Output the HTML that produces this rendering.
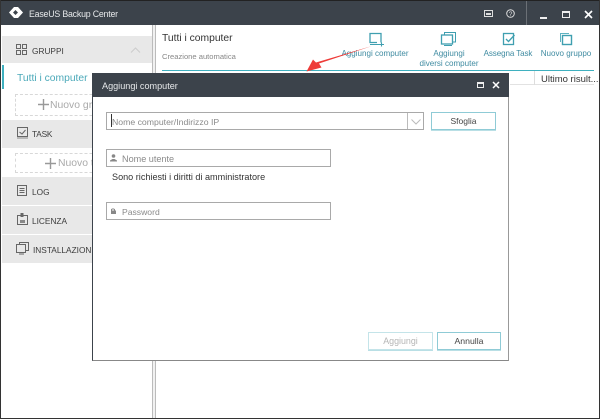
<!DOCTYPE html>
<html><head><meta charset="utf-8">
<style>
html,body{margin:0;padding:0;background:#fff}
#p{position:relative;width:600px;height:419px;overflow:hidden;background:#fff;font-family:"Liberation Sans",sans-serif;font-size:9.5px;color:#444;filter:blur(.3px)}
.a{position:absolute}
.t{position:absolute;white-space:nowrap;line-height:12px}
.g{position:absolute;left:2px;width:150px;background:#e8e8e8}
.b{color:#3f8ba1;font-size:8.050px;text-align:center}
svg{position:absolute;overflow:visible}
.inp{position:absolute;box-sizing:border-box;border:1px solid #a9a9a9;background:#fff}
.btn{position:absolute;box-sizing:border-box;border:1px solid #8fcbd6;box-shadow:0 1px 0 #b9dfe5;text-align:center;background:#fff}
.s{font-size:8.300px;color:#3c3c3c}
</style></head><body><div id="p">
<div class="a" style="left:0;top:0;width:600px;height:25px;background:#3c434b"></div>
<div class="a" style="left:0;top:0;width:600px;height:1px;background:#222"></div>
<div class="a" style="left:0;top:0;width:1px;height:419px;background:#333"></div>
<div class="a" style="left:599px;top:0;width:1px;height:419px;background:#333"></div>
<div class="a" style="left:0;top:418px;width:600px;height:1px;background:#333"></div>
<svg style="left:8px;top:6px" width="16" height="13"><path d="M6 1L1 6.500L6 12H10L15 6.500L10 1ZM7.500 4L10 6.500L7.500 9L5 6.500Z" fill="#fff" fill-rule="evenodd"/></svg>
<div class="t" style="left:29px;top:8px;color:#e6e8ea;font-size:8.800px;letter-spacing:-.2px">EaseUS Backup Center</div>
<svg style="left:484px;top:9px" width="10" height="10"><rect x="0.500" y="1.500" width="8" height="6" fill="none" stroke="#ddd"/><rect x="2" y="4" width="5" height="2" fill="#ddd"/></svg>
<svg style="left:506px;top:9px" width="10" height="10"><circle cx="4.500" cy="4.500" r="3.800" fill="none" stroke="#ddd"/><text x="4.500" y="7" font-size="6.500" fill="#ddd" text-anchor="middle" font-family="Liberation Sans">?</text></svg>
<div class="a" style="left:526px;top:1px;width:1px;height:24px;background:#6b7076"></div>
<div class="a" style="left:540px;top:17px;width:7px;height:1.500px;background:#eee"></div>
<div class="a" style="left:562px;top:11px;width:8px;height:7px;box-sizing:border-box;border:1px solid #eee;border-top-width:2px"></div>
<svg style="left:584px;top:10px" width="10" height="10"><path d="M1 1L8 8M8 1L1 8" stroke="#fff" stroke-width="1.600"/></svg>

<div class="a" style="left:152px;top:25px;width:1px;height:393px;background:#bbb"></div>
<div class="a" style="left:155px;top:25px;width:1px;height:393px;background:#bbb"></div>
<div class="a" style="left:153px;top:25px;width:2px;height:393px;background:#f1f1f1"></div>

<div class="g" style="top:36px;height:27px"></div>
<svg style="left:16px;top:44px" width="12" height="12"><path d="M.5.5h4v4h-4zM6.500.5h4v4h-4zM.5 6.500h4v4h-4zM6.500 6.500h4v4h-4z" fill="none" stroke="#666"/></svg>
<div class="t s" style="left:32px;top:44.500px">GRUPPI</div>
<svg style="left:130px;top:47px" width="11" height="7"><path d="M1 5.500L5.500 1L10 5.500" fill="none" stroke="#ccc"/></svg>
<div class="a" style="left:2px;top:65px;width:2px;height:24px;background:#3fb0bf"></div>
<div class="t" style="left:17px;top:73px;color:#4ba9b9;font-size:10.300px">Tutti i computer</div>
<div class="a" style="left:15px;top:94px;width:137px;height:22px;box-sizing:border-box;border:1px dashed #d8d8d8"></div>
<svg style="left:38px;top:99px" width="11" height="11"><path d="M5.500 0V11M0 5.500H11" stroke="#999" stroke-width="1.400"/></svg>
<div class="t" style="left:50px;top:100px;color:#aaa;font-size:10.400px">Nuovo gruppo</div>

<div class="g" style="top:120px;height:28px"></div>
<svg style="left:17px;top:127px" width="12" height="12"><rect x=".5" y=".5" width="10" height="9" fill="none" stroke="#666"/><path d="M2.500 5L5 7L8.500 3" fill="none" stroke="#666"/><path d="M0 11H11" stroke="#888"/></svg>
<div class="t s" style="left:32px;top:128px;letter-spacing:-.2px">TASK</div>
<div class="a" style="left:15px;top:153px;width:137px;height:20px;box-sizing:border-box;border:1px dashed #d8d8d8"></div>
<svg style="left:45px;top:158px" width="11" height="11"><path d="M5.500 0V11M0 5.500H11" stroke="#999" stroke-width="1.400"/></svg>
<div class="t" style="left:58px;top:158px;color:#aaa;font-size:10.400px">Nuovo task</div>

<div class="g" style="top:177px;height:28px"></div>
<svg style="left:17px;top:185px" width="12" height="12"><rect x=".5" y=".5" width="9" height="10" fill="none" stroke="#666"/><path d="M2.500 3.500H7.500M2.500 5.500H7.500M2.500 7.500H7.500" stroke="#666"/></svg>
<div class="t s" style="left:32px;top:186px">LOG</div>
<div class="g" style="top:206px;height:28px"></div>
<svg style="left:17px;top:213px" width="12" height="13"><rect x=".5" y="2.500" width="10" height="9" fill="none" stroke="#666"/><rect x="3.500" y="0" width="3" height="4" fill="#666"/><rect x="3" y="7" width="5" height="3" fill="#888"/></svg>
<div class="t s" style="left:32px;top:215px">LICENZA</div>
<div class="g" style="top:235px;height:28px"></div>
<svg style="left:16px;top:242px" width="14" height="13"><rect x="3.500" y=".5" width="9" height="8" fill="none" stroke="#666"/><rect x=".5" y="2.500" width="9" height="8" fill="#e8e8e8" stroke="#666"/><path d="M3 12H8" stroke="#666"/></svg>
<div class="t s" style="left:33px;top:244px">INSTALLAZIONE</div>

<div class="t" style="left:162px;top:33px;color:#333;font-size:10.300px">Tutti i computer</div>
<div class="t" style="left:162px;top:50.500px;color:#888;font-size:7.600px">Creazione automatica</div>
<div class="a" style="left:162px;top:70px;width:432px;height:1px;background:#3fb0bf"></div>

<svg style="left:369px;top:33px" width="16" height="14"><path d="M12 9.500V.5H1V9.500H8" fill="none" stroke="#3f9fb0" stroke-width="1.300"/><path d="M1 11.500H10M10 11.500H15M12.500 9.500V13.500" stroke="#3f9fb0" stroke-width="1.100"/></svg>
<div class="t b" style="left:335px;top:48px;width:80px">Aggiungi computer</div>
<svg style="left:441px;top:32px" width="15" height="15"><path d="M3.500 3V.5H14.500V10H12" fill="none" stroke="#3f9fb0"/><rect x=".5" y="3" width="11" height="9" fill="none" stroke="#3f9fb0" stroke-width="1.300"/><path d="M3 13.500H11" stroke="#3f9fb0"/></svg>
<div class="t b" style="left:410px;top:49px;width:78px;line-height:10px">Aggiungi<br>diversi computer</div>
<svg style="left:503px;top:33px" width="14" height="14"><rect x=".5" y=".5" width="10" height="11" fill="none" stroke="#3f9fb0" stroke-width="1.300"/><path d="M3 6L5.500 8.500L11.500 2" fill="none" stroke="#3f9fb0" stroke-width="1.300"/></svg>
<div class="t b" style="left:478px;top:48px;width:60px;letter-spacing:-.1px">Assegna Task</div>
<svg style="left:560px;top:33px" width="13" height="13"><path d="M.5 9V.5H9" fill="none" stroke="#5fb3c1"/><rect x="2.500" y="2.500" width="9" height="9" fill="none" stroke="#3f9fb0" stroke-width="1.400"/></svg>
<div class="t b" style="left:538px;top:48px;width:56px">Nuovo gruppo</div>

<div class="a" style="left:510px;top:84px;width:84px;height:1px;background:#e2e2e2"></div>
<div class="a" style="left:534px;top:71px;width:1px;height:14px;background:#ddd"></div>
<div class="t" style="left:541px;top:73.500px;color:#333;font-size:9.500px">Ultimo risult...</div>

<div class="a" style="left:92px;top:73px;width:417px;height:288px;box-sizing:border-box;background:#fff;border:1px solid #3c434b;border-right:1px solid #999;border-bottom:1px solid #888"></div>
<div class="a" style="left:92px;top:73px;width:417px;height:24px;background:#3c434b"></div>
<div class="t" style="left:102px;top:80px;color:#e6e8ea;font-size:9.100px">Aggiungi computer</div>
<div class="a" style="left:477px;top:82px;width:7px;height:6px;box-sizing:border-box;border:1px solid #eee;border-top-width:2px"></div>
<svg style="left:492px;top:81px" width="9" height="9"><path d="M1 1L7 7M7 1L1 7" stroke="#fff" stroke-width="1.500"/></svg>

<div class="inp" style="left:106px;top:112px;width:318px;height:18px"></div>
<div class="a" style="left:407px;top:113px;width:1px;height:16px;background:#bbb"></div>
<svg style="left:411px;top:119px" width="11" height="7"><path d="M.5 .5L5 5L9.500 .5" fill="none" stroke="#bbb"/></svg>
<div class="a" style="left:111px;top:114px;width:1px;height:13px;background:#333"></div>
<div class="t" style="left:112px;top:116px;color:#8a8a8a;font-size:8.700px">Nome computer/Indirizzo IP</div>
<div class="btn" style="left:431px;top:112px;width:65px;height:18px;line-height:17px;color:#444;font-size:8.500px">Sfoglia</div>

<div class="inp" style="left:106px;top:149px;width:225px;height:18px"></div>
<svg style="left:110px;top:154px" width="8" height="8"><circle cx="3.500" cy="2" r="1.800" fill="#888"/><path d="M0 7.500H7V6.500L4.500 5H2.500L0 6.500Z" fill="#888"/></svg>
<div class="t" style="left:122px;top:153px;color:#8a8a8a;font-size:9.100px">Nome utente</div>
<div class="t" style="left:112px;top:171px;color:#333;font-size:9.100px">Sono richiesti i diritti di amministratore</div>
<div class="inp" style="left:106px;top:202px;width:225px;height:18px"></div>
<svg style="left:110px;top:207px" width="7" height="8"><path d="M1.500 3.500V2.500a2 2 0 0 1 3 0V3.500" fill="none" stroke="#888"/><rect x="1" y="3.500" width="5" height="3.500" fill="#888"/></svg>
<div class="t" style="left:122px;top:206px;color:#8a8a8a;font-size:8.600px">Password</div>

<div class="btn" style="left:368px;top:332px;width:65px;height:18px;line-height:17px;border-color:#c4e4e9;color:#b5b5b5;font-size:8.900px">Aggiungi</div>
<div class="btn" style="left:437px;top:332px;width:64px;height:18px;line-height:17px;color:#444;font-size:8.700px">Annulla</div>

<svg style="left:300px;top:40px" width="80" height="35"><path d="M72 6L19 23.500L21.500 27.500L6.500 31.500L13 19.500L16 22.500Z" fill="#ee3b38"/></svg>
</div></body></html>
